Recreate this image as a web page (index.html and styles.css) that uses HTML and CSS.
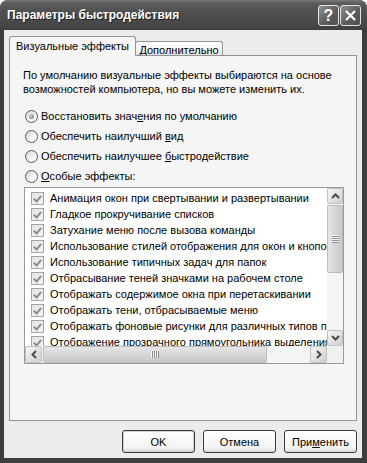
FILE: index.html
```html
<!DOCTYPE html>
<html lang="ru">
<head>
    <meta charset="UTF-8">
    <title>Параметры быстродействия</title>
    <link rel="stylesheet" href="styles.css">
</head>
<body>

    <div class="window">
        <div class="titlebar">
            <span class="title">Параметры быстродействия</span>
            <div class="caption-buttons">
                <span class="cap-btn help">?</span>
                <span class="cap-btn close">
                    <svg width="11" height="11" viewBox="0 0 11 11"><path d="M1 1 L10 10 M10 1 L1 10" stroke="#fff" stroke-width="2.2" fill="none"/></svg>
                </span>
            </div>
        </div>

        <div class="client">
            <div class="tabs">
                <div class="tab active">Визуальные эффекты</div>
                <div class="tab inactive">Дополнительно</div>
            </div>

            <div class="panel">
                <p class="intro">По умолчанию визуальные эффекты выбираются на основе<br>возможностей компьютера, но вы можете изменить их.</p>

                <div class="options">
                    <div class="radio checked"><span class="radio-box"></span><span>Восстановить знач<u>е</u>ния по умолчанию</span></div>
                    <div class="radio"><span class="radio-box"></span><span>Обеспечить наилучший <u>в</u>ид</span></div>
                    <div class="radio"><span class="radio-box"></span><span>Обеспечить наилучшее <u>б</u>ыстродействие</span></div>
                    <div class="radio"><span class="radio-box"></span><span><u>О</u>собые эффекты:</span></div>
                </div>

                <div class="listbox">
                    <div class="list-items">
                        <div class="item"><span class="check"></span><span>Анимация окон при свертывании и развертывании</span></div>
                        <div class="item"><span class="check"></span><span>Гладкое прокручивание списков</span></div>
                        <div class="item"><span class="check"></span><span>Затухание меню после вызова команды</span></div>
                        <div class="item"><span class="check"></span><span>Использование стилей отображения для окон и кнопок</span></div>
                        <div class="item"><span class="check"></span><span>Использование типичных задач для папок</span></div>
                        <div class="item"><span class="check"></span><span>Отбрасывание теней значками на рабочем столе</span></div>
                        <div class="item"><span class="check"></span><span>Отображать содержимое окна при перетаскивании</span></div>
                        <div class="item"><span class="check"></span><span>Отображать тени, отбрасываемые меню</span></div>
                        <div class="item"><span class="check"></span><span>Отображать фоновые рисунки для различных типов папок</span></div>
                        <div class="item"><span class="check"></span><span>Отображение прозрачного прямоугольника выделения</span></div>
                    </div>

                    <div class="vscroll">
                        <div class="sb-btn">
                            <svg width="9" height="6" viewBox="0 0 9 6"><path d="M1 5 L4.5 1.5 L8 5" stroke="#4a4a4a" stroke-width="2" fill="none"/></svg>
                        </div>
                        <div class="sb-thumb v"><span class="grip v"></span></div>
                        <div class="sb-track"></div>
                        <div class="sb-btn">
                            <svg width="9" height="6" viewBox="0 0 9 6"><path d="M1 1 L4.5 4.5 L8 1" stroke="#4a4a4a" stroke-width="2" fill="none"/></svg>
                        </div>
                    </div>

                    <div class="hscroll">
                        <div class="sb-btn">
                            <svg width="6" height="9" viewBox="0 0 6 9"><path d="M5 1 L1.5 4.5 L5 8" stroke="#4a4a4a" stroke-width="2" fill="none"/></svg>
                        </div>
                        <div class="sb-thumb h"><span class="grip h"></span></div>
                        <div class="sb-track"></div>
                        <div class="sb-btn">
                            <svg width="6" height="9" viewBox="0 0 6 9"><path d="M1 1 L4.5 4.5 L1 8" stroke="#4a4a4a" stroke-width="2" fill="none"/></svg>
                        </div>
                    </div>

                    <div class="corner"></div>
                </div>
            </div>

            <div class="buttons">
                <button class="btn default">OK</button>
                <button class="btn">Отмена</button>
                <button class="btn">При<u>м</u>енить</button>
            </div>
        </div>
    </div>

</body>
</html>
```

FILE: styles.css
```css
body {
    margin: 0;
    font-family: "Liberation Sans", Arial, sans-serif;
    font-size: 11px;
    color: #000;
    background: #fff;
}
.window {
    width: 367px;
    height: 463px;
    background: #3d3d3d;
    border-radius: 8px 8px 0 0;
    overflow: hidden;
    display: flex;
    flex-direction: column;
}
.titlebar {
    height: 30px;
    flex: none;
    box-sizing: border-box;
    display: flex;
    align-items: center;
    justify-content: space-between;
    padding: 0 6px 0 7px;
    background: linear-gradient(#7a7a7a, #5c5c5c 3px, #505050 12px, #474747 24px, #3f3f3f);
}
.title {
    color: #fff;
    font-weight: bold;
    font-size: 12px;
    text-shadow: 1px 1px #1e1e1e;
}
.caption-buttons {
    display: flex;
    gap: 1px;
    margin-top: 1px;
}
.cap-btn {
    width: 21px;
    height: 21px;
    box-sizing: border-box;
    border: 1px solid #e4e4e4;
    border-radius: 3px;
    background: linear-gradient(135deg, #909090, #5e5e5e 55%, #4e4e4e);
    display: flex;
    align-items: center;
    justify-content: center;
    color: #fff;
}
.cap-btn.help {
    font-size: 16px;
    font-weight: bold;
}
.client {
    flex: 1;
    margin: 0 5px 5px 4px;
    padding: 6px 5px 5px 5px;
    background: #ececec;
    display: flex;
    flex-direction: column;
}
.tabs {
    display: flex;
    align-items: flex-end;
    height: 19px;
}
.tab {
    box-sizing: border-box;
    border: 1px solid #939393;
    border-bottom: none;
    border-radius: 3px 3px 0 0;
    text-align: center;
    white-space: nowrap;
}
.tab.active {
    width: 127px;
    height: 20px;
    margin-bottom: -1px;
    padding-top: 3px;
    background: #f5f5f5;
    position: relative;
    z-index: 1;
}
.tab.inactive {
    width: 88px;
    height: 14px;
    margin-left: -1px;
    line-height: 16px;
    background: linear-gradient(#ffffff, #f0f0f0 70%, #e2e2e2);
}
.panel {
    box-sizing: border-box;
    height: 366px;
    border: 1px solid #939393;
    background: #f5f5f5;
    padding: 12px 13px 0 13px;
}
.intro {
    margin: 0;
    line-height: 14px;
    white-space: nowrap;
}
.options {
    margin-top: 10px;
}
.radio {
    display: flex;
    align-items: center;
    height: 20px;
    padding-left: 2px;
    gap: 3px;
}
.radio-box {
    width: 13px;
    height: 13px;
    box-sizing: border-box;
    border: 1px solid #555;
    border-radius: 50%;
    background: linear-gradient(135deg, #d6d6d6, #f4f4f4 60%, #ffffff);
    display: flex;
    align-items: center;
    justify-content: center;
}
.radio.checked .radio-box::after {
    content: "";
    width: 5px;
    height: 5px;
    border-radius: 50%;
    background: radial-gradient(circle at 35% 35%, #d0d0d0, #8a8a8a 70%);
}
.listbox {
    margin: 1px 0 0 1px;
    width: 320px;
    height: 177px;
    box-sizing: border-box;
    border: 1px solid #999;
    background: #fff;
    display: grid;
    grid-template-columns: 302px 16px;
    grid-template-rows: 158px 17px;
}
.list-items {
    overflow: hidden;
    padding-top: 2px;
}
.item {
    display: flex;
    align-items: center;
    height: 16px;
    padding-left: 6px;
    gap: 6px;
    white-space: nowrap;
}
.check {
    flex: none;
    width: 13px;
    height: 13px;
    box-sizing: border-box;
    border: 1px solid #a4a4a4;
    background: linear-gradient(135deg, #e4e4e4, #f6f6f6);
    position: relative;
}
.check::after {
    content: "";
    position: absolute;
    left: 3px;
    top: 1px;
    width: 3px;
    height: 6px;
    border: solid #8c8c8c;
    border-width: 0 2px 2px 0;
    transform: rotate(40deg);
}
.vscroll {
    display: flex;
    flex-direction: column;
    background: #f4f4f4;
}
.hscroll {
    display: flex;
    background: #f4f4f4;
}
.corner {
    background: #f0f0f0;
}
.sb-btn {
    flex: none;
    width: 16px;
    height: 16px;
    box-sizing: border-box;
    border: 1px solid #c2c2c2;
    border-radius: 2px;
    background: linear-gradient(135deg, #f6f6f6, #dadada 70%, #cfcfcf);
    display: flex;
    align-items: center;
    justify-content: center;
}
.hscroll .sb-btn {
    width: 17px;
    height: 17px;
}
.sb-thumb {
    flex: none;
    box-sizing: border-box;
    border: 1px solid #bdbdbd;
    border-radius: 2px;
    display: flex;
    align-items: center;
    justify-content: center;
}
.sb-thumb.v {
    height: 68px;
    margin-top: 1px;
    background: linear-gradient(90deg, #e6e6e6, #d6d6d6 50%, #c8c8c8);
}
.sb-thumb.h {
    width: 224px;
    margin-left: 1px;
    background: linear-gradient(#e6e6e6, #d6d6d6 50%, #c8c8c8);
}
.sb-track {
    flex: 1;
}
.grip.v {
    width: 7px;
    height: 8px;
    background: repeating-linear-gradient(#f8f8f8 0 1px, #8e8e8e 1px 2px);
}
.grip.h {
    width: 8px;
    height: 7px;
    background: repeating-linear-gradient(90deg, #f8f8f8 0 1px, #8e8e8e 1px 2px);
}
.buttons {
    display: flex;
    justify-content: flex-end;
    gap: 8px;
    margin-top: 9px;
}
.btn {
    width: 73px;
    height: 23px;
    box-sizing: border-box;
    border: 1px solid #3a3a3a;
    border-radius: 3px;
    background: linear-gradient(#ffffff, #f3f3f3 80%, #d9d9d9);
    font: inherit;
    color: #000;
    padding: 0;
}
.btn.default {
    box-shadow: inset 0 0 0 1px #cfcfcf;
}
```
